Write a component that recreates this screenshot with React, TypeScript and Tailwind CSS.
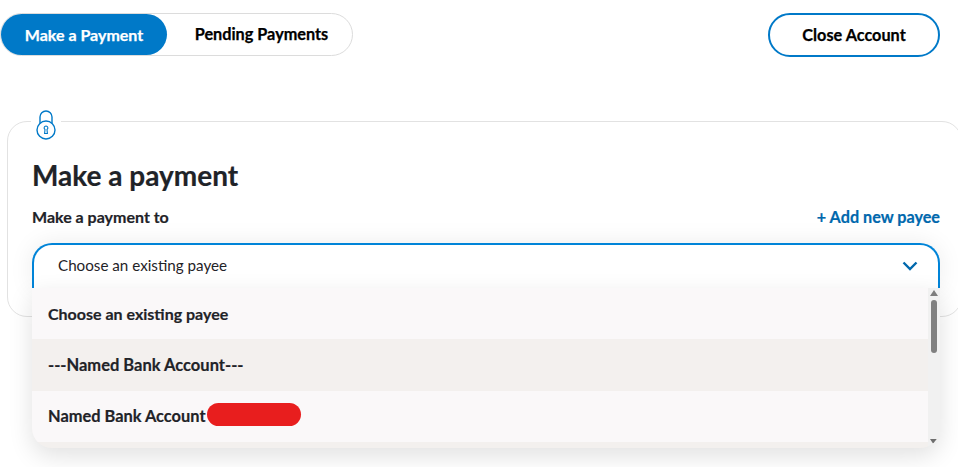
export default function App() {
  return (
    <div className="relative h-[467px] w-[958px] overflow-hidden bg-white font-['Lato','Liberation_Sans',sans-serif] text-[#1f2328]">
      <div className="flex items-start justify-between pt-[13px] pr-[18px]">
        <div className="flex h-[43px] w-[353px] rounded-full border border-[#dcdcdc]">
          <div className="flex h-[41px] w-[166px] items-center justify-center rounded-full bg-[#0079c8] text-[16px] font-bold text-white [-webkit-text-stroke:0.25px_#ffffff]">Make a Payment</div>
          <div className="flex h-[41px] flex-1 items-center justify-center pl-[4px] text-[16.25px] font-bold text-black [-webkit-text-stroke:0.25px_#000000]">Pending Payments</div>
        </div>
        <div className="flex h-[44px] w-[172px] items-center justify-center rounded-full border-2 border-[#0079c8] text-[16.25px] font-bold text-black [-webkit-text-stroke:0.25px_#000000]">Close Account</div>
      </div>
      <div className="relative mt-[64px] ml-[7px] h-[196px] w-[955px] rounded-[20px] border border-[#e2e2e2] pt-[31px] pr-[21px] pl-[24px]">
        <div className="absolute -top-[12px] left-[23px] bg-white px-[4px]">
          <svg width="22" height="31" viewBox="0 0 22 31" fill="none" stroke="#0079c8" strokeWidth="1.4">
            <path d="M5 13V7a6 6 0 0 1 12 0v6" />
            <circle cx="11" cy="20" r="9" />
            <path d="M11 16a1.9 1.9 0 0 1 1 3.5l.4 4h-2.8l.4-4A1.9 1.9 0 0 1 11 16z" strokeWidth="1.1" />
          </svg>
        </div>
        <h1 className="text-[28px] leading-[44px] font-bold [-webkit-text-stroke:0.2px_#1f2328]">Make a payment</h1>
        <div className="mt-[10px] flex items-center justify-between leading-[20px]">
          <span className="text-[16px] font-bold [-webkit-text-stroke:0.2px_#1f2328]">Make a payment to</span>
          <span className="text-[16.2px] font-bold text-[#0068ad] [-webkit-text-stroke:0.2px_#0068ad]">+ Add new payee</span>
        </div>
      </div>
      <div className="absolute top-[243px] left-[32px] w-[908px] rounded-t-[20px] border-x-2 border-t-2 border-[#0084d8] bg-white shadow-[0_0_24px_rgba(0,0,0,0.08)]">
        <div className="flex h-[43px] items-center justify-between pr-[20px] pb-[2px] pl-[24px] text-[15.2px]">
          <span>Choose an existing payee</span>
          <svg width="16" height="10" viewBox="0 0 16 10" fill="none" stroke="#0068ad" strokeWidth="2.4">
            <path d="M1.5 1.5 8 8l6.5-6.5" />
          </svg>
        </div>
      </div>
      <div className="absolute top-[288px] left-[32px] flex h-[160px] w-[908px] overflow-hidden rounded-b-[20px] bg-[#f3f0ee] shadow-[0_8px_24px_rgba(0,0,0,0.12)]">
        <div className="flex-1 font-bold [-webkit-text-stroke:0.2px_#1f2328]">
          <div className="flex h-[51px] items-center bg-[#faf8f9] pl-[16px] text-[16px]">Choose an existing payee</div>
          <div className="flex h-[52px] items-center bg-[#f3f0ee] pt-[1px] pl-[16px] text-[16.5px]">---Named Bank Account---</div>
          <div className="flex h-[51px] items-center bg-[#faf8f9] pl-[16px] text-[16.4px]">
            Named Bank Account
            <span className="mb-[4px] ml-[2px] h-[23px] w-[94px] rounded-full bg-[#e81e1e]" />
          </div>
        </div>
        <div className="relative w-[12px] bg-[#f1f1f1]">
          <div className="absolute top-[2px] left-[2px] h-0 w-0 border-x-[4px] border-b-[6px] border-x-transparent border-b-[#7d7d7d]" />
          <div className="absolute top-[12px] left-[3px] h-[53px] w-[6px] rounded-full bg-[#808080]" />
          <div className="absolute bottom-[3px] left-[2px] h-0 w-0 border-x-[4px] border-t-[6px] border-x-transparent border-t-[#6e6e6e]" />
        </div>
      </div>
    </div>
  );
}
